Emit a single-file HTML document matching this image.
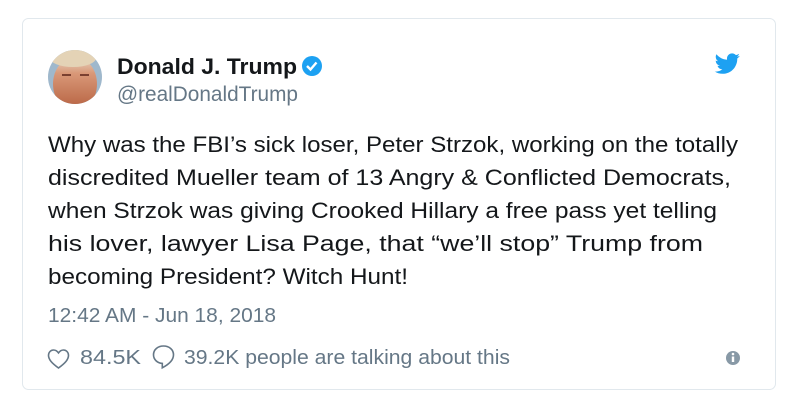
<!DOCTYPE html>
<html><head><meta charset="utf-8"><style>
html,body{margin:0;padding:0;background:#fff;width:798px;height:409px;overflow:hidden}
svg{display:block}
text{font-family:"Liberation Sans",sans-serif}
</style></head><body>
<svg width="798" height="409" viewBox="0 0 798 409">
<rect x="22.5" y="18.5" width="753" height="371" rx="6" fill="#fff" stroke="#e1e8ed"/>
<defs><clipPath id="av"><circle cx="75" cy="77" r="27"/></clipPath>
<linearGradient id="sk" x1="0" y1="0" x2="0" y2="1"><stop offset="0" stop-color="#e6d8c4"/><stop offset="0.3" stop-color="#d99878"/><stop offset="1" stop-color="#b5603f"/></linearGradient></defs>
<g clip-path="url(#av)">
<rect x="48" y="50" width="54" height="54" fill="#9fb8cc"/>
<ellipse cx="75" cy="84" rx="22" ry="27" fill="url(#sk)"/>
<ellipse cx="73" cy="58" rx="23" ry="9" fill="#e4d3b6"/>
<rect x="62" y="74" width="9" height="2" fill="#7a4030"/>
<rect x="80" y="74" width="9" height="2" fill="#7a4030"/>
</g>
<text x="117" y="74" font-size="22" font-weight="bold" fill="#14171a" textLength="180" lengthAdjust="spacingAndGlyphs">Donald J. Trump</text>
<circle cx="312" cy="66" r="10" fill="#1da1f2"/>
<path d="M307 66l3.5 3.5 6-7" stroke="#fff" stroke-width="2.4" fill="none"/>
<text x="117" y="101" font-size="21" fill="#657786" textLength="181" lengthAdjust="spacingAndGlyphs">@realDonaldTrump</text>
<path transform="translate(715,51) scale(1.05)" fill="#1da1f2" d="M23.6 4.6c-.9.4-1.8.6-2.8.8 1-.6 1.8-1.6 2.2-2.7-1 .6-2 1-3.1 1.2-.9-1-2.2-1.6-3.6-1.6-2.7 0-4.9 2.2-4.9 4.9 0 .4 0 .8.1 1.1C7.4 8.1 3.8 6.1 1.4 3.1c-.4.7-.7 1.6-.7 2.5 0 1.7.9 3.2 2.2 4.1-.8 0-1.600-.2-2.2-.6v.1c0 2.4 1.7 4.4 3.9 4.8-.4.1-.8.2-1.3.2-.3 0-.6 0-.9-.1.6 2 2.4 3.4 4.6 3.4-1.7 1.3-3.8 2.1-6.1 2.1-.4 0-.8 0-1.2-.1 2.2 1.4 4.8 2.2 7.5 2.2 9.1 0 14-7.5 14-14v-.6c1-.7 1.8-1.6 2.4-2.5z"/>
<g font-size="22" fill="#14171a">
<text x="48" y="152" textLength="690" lengthAdjust="spacingAndGlyphs">Why was the FBI’s sick loser, Peter Strzok, working on the totally</text>
<text x="48" y="185" textLength="683" lengthAdjust="spacingAndGlyphs">discredited Mueller team of 13 Angry &amp; Conflicted Democrats,</text>
<text x="48" y="218" textLength="669" lengthAdjust="spacingAndGlyphs">when Strzok was giving Crooked Hillary a free pass yet telling</text>
<text x="48" y="251" textLength="655" lengthAdjust="spacingAndGlyphs">his lover, lawyer Lisa Page, that “we’ll stop” Trump from</text>
<text x="48" y="284" textLength="360" lengthAdjust="spacingAndGlyphs">becoming President? Witch Hunt!</text>
</g>
<text x="48" y="322" font-size="20" fill="#657786" textLength="228" lengthAdjust="spacingAndGlyphs">12:42 AM - Jun 18, 2018</text>
<path d="M58.5 368c-6.5-4.8-10-8.4-10-12.6 0-3.2 2.3-5.4 5-5.4 2 0 3.7 1.1 5 2.9 1.3-1.8 3-2.9 5-2.9 2.7 0 5 2.2 5 5.4 0 4.2-3.5 7.8-10 12.6z" fill="none" stroke="#657786" stroke-width="1.6"/>
<text x="80" y="364" font-size="20" fill="#657786" textLength="61" lengthAdjust="spacingAndGlyphs">84.5K</text>
<path d="M163.5 346c-5.8 0-10 3.8-10 8.8 0 4.7 3.8 8.3 8.8 8.6v4.4c4.5-2.3 11.2-6.5 11.2-13 0-5-4.2-8.8-10-8.8z" fill="none" stroke="#657786" stroke-width="1.6"/>
<text x="184" y="364" font-size="20" fill="#657786" textLength="326" lengthAdjust="spacingAndGlyphs">39.2K people are talking about this</text>
<circle cx="733" cy="358" r="7" fill="#8899a6"/>
<rect x="731.8" y="356.5" width="2.4" height="5.5" fill="#fff"/>
<circle cx="733" cy="354" r="1.3" fill="#fff"/>
</svg>
</body></html>
